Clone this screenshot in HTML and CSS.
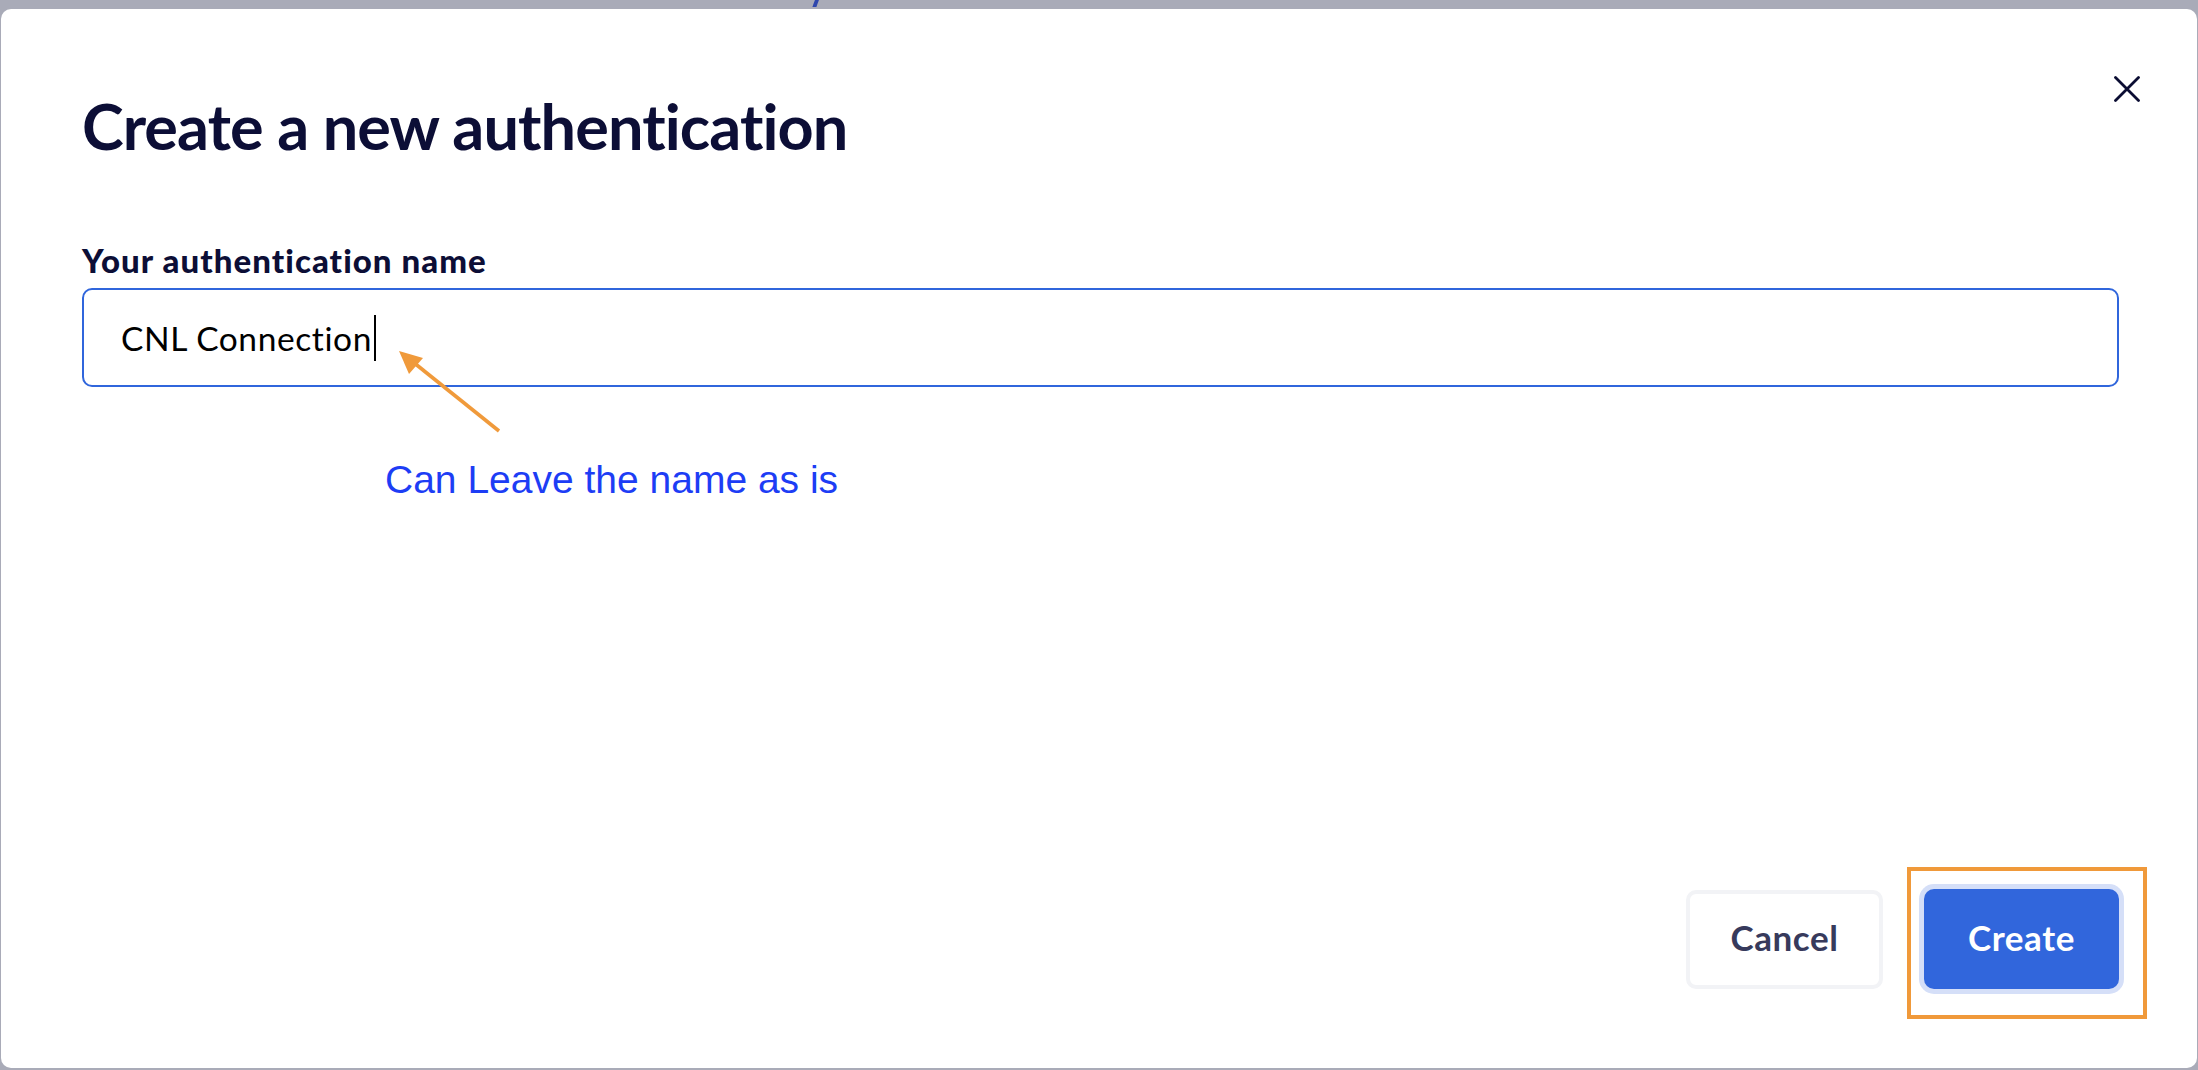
FILE: index.html
```html
<!DOCTYPE html>
<html lang="en">
<head>
<meta charset="utf-8">
<title>Create a new authentication</title>
<link rel="stylesheet" href="styles.css">
</head>
<body>
<span class="peek"></span>
<div class="modal">
  <button class="close" aria-label="Close">
    <svg viewBox="0 0 26 26" width="26" height="26"><path d="M1.5 1.5 L24.5 24.5 M24.5 1.5 L1.5 24.5" stroke="#0b0d33" stroke-width="2.8" stroke-linecap="round" fill="none"/></svg>
  </button>
  <h1 class="title">Create a new authentication</h1>
  <label class="label">Your authentication name</label>
  <div class="field"><span class="value">CNL Connection</span><span class="caret"></span></div>

  <div class="footer">
    <button class="btn btn-cancel">Cancel</button>
    <button class="btn btn-create">Create</button>
  </div>

  <svg class="arrow" viewBox="0 0 110 90" width="110" height="90">
    <line x1="104" y1="84" x2="18" y2="15" stroke="#f09a3b" stroke-width="3.6" stroke-linecap="butt"/>
    <polygon points="4,4 28,11 14,27" fill="#f09a3b"/>
  </svg>
  <div class="note">Can Leave the name as is</div>
  <div class="highlight"></div>
</div>
</body>
</html>
```

FILE: styles.css
```css
* { box-sizing: border-box; }
html, body { margin: 0; padding: 0; }
body {
  width: 2198px;
  height: 1070px;
  overflow: hidden;
  background: #a9abb8;
  font-family: Lato, "Open Sans", sans-serif;
  position: relative;
}
.peek {
  position: absolute;
  left: 814px;
  top: -2px;
  width: 4px;
  height: 9px;
  background: #2f47ad;
  transform: skewX(-20deg);
}
.modal {
  position: relative;
  margin: 9px 1px 2px 1px;
  height: 1059px;
  background: #ffffff;
  border-radius: 10px;
  padding: 79px 78px 79px 81px;
  display: flex;
  flex-direction: column;
}
.close {
  position: absolute;
  top: 67px;
  right: 57px;
  width: 26px;
  height: 26px;
  padding: 0;
  border: 0;
  background: transparent;
  display: flex;
}
.title {
  margin: 0;
  font-size: 63px;
  line-height: 76px;
  font-weight: 700;
  letter-spacing: -0.9px;
  color: #0c0e36;
}
.label {
  margin-top: 77px;
  font-size: 33px;
  line-height: 38px;
  font-weight: 900;
  letter-spacing: 1.05px;
  color: #0c0e36;
}
.field {
  margin-top: 9px;
  height: 99px;
  border: 2px solid #3066dc;
  border-radius: 10px;
  padding: 0 37px;
  display: flex;
  align-items: center;
  font-size: 33.5px;
  letter-spacing: 0.6px;
  color: #000;
}
.caret {
  display: inline-block;
  width: 2px;
  height: 46px;
  background: #000;
  margin-left: 2px;
}
.footer {
  margin-top: auto;
  display: flex;
  justify-content: flex-end;
  align-items: center;
  gap: 41px;
}
.btn {
  font-family: Lato, "Open Sans", sans-serif;
  font-size: 35px;
  font-weight: 700;
  letter-spacing: 0.6px;
  border-radius: 10px;
  height: 100px;
  padding: 0 0 5px 0;
  cursor: pointer;
}
.btn-cancel {
  width: 197px;
  height: 99px;
  background: #fff;
  border: 4px solid #f2f3f6;
  color: #373a5c;
}
.btn-create {
  width: 195px;
  background: #3166dc;
  border: 0;
  color: #fff;
  box-shadow: 0 0 0 5px #d5dff8;
}
.arrow {
  position: absolute;
  left: 394px;
  top: 338px;
}
.note {
  position: absolute;
  left: 384px;
  top: 449px;
  font-family: "Liberation Sans", Arial, sans-serif;
  font-size: 39px;
  line-height: 44px;
  color: #1d3df5;
  white-space: nowrap;
}
.highlight {
  position: absolute;
  left: 1906px;
  top: 858px;
  width: 240px;
  height: 152px;
  border: 4px solid #f0993a;
}
```
